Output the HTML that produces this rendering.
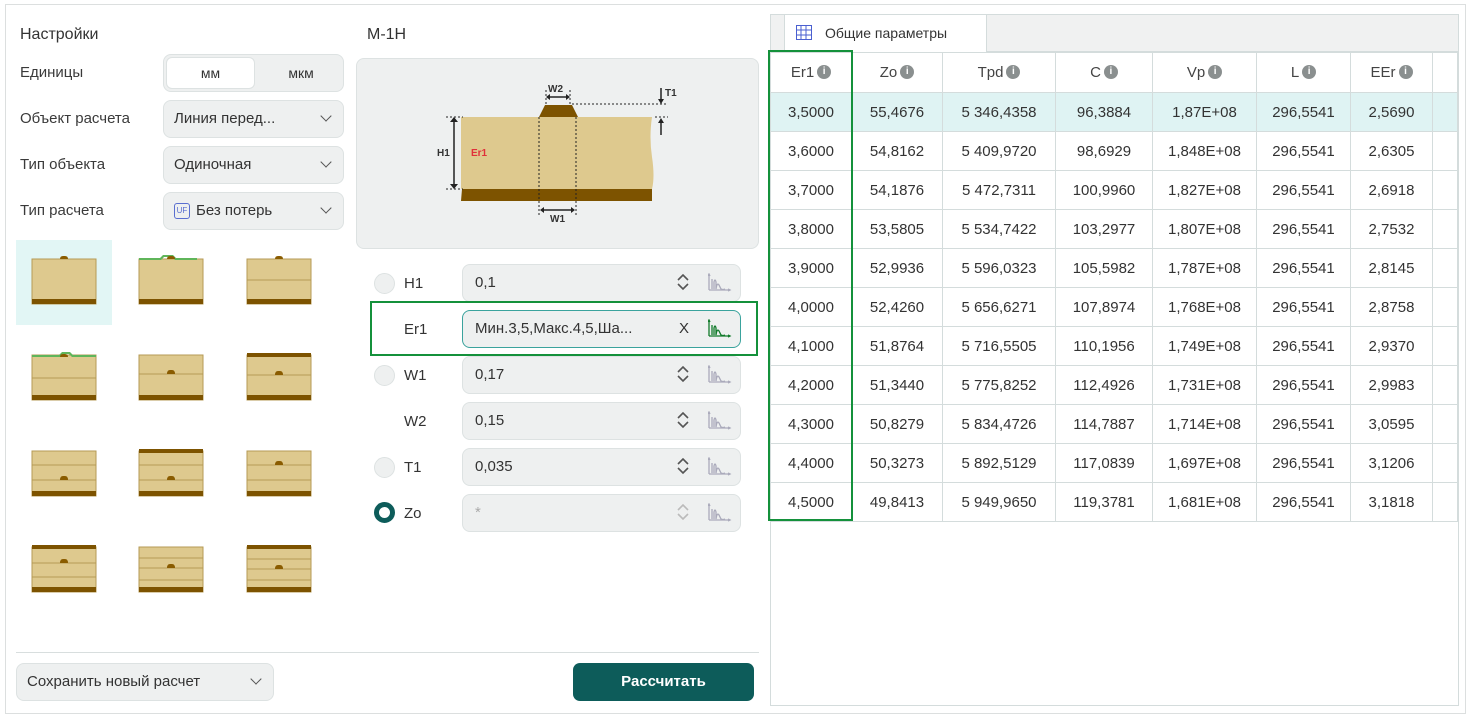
<!DOCTYPE html>
<html><head><meta charset="utf-8"><style>
*{box-sizing:border-box;margin:0;padding:0}
body{width:1471px;height:720px;background:#fff;font-family:"Liberation Sans",sans-serif;color:#333;font-size:15px;position:relative;overflow:hidden}
.a{position:absolute}
.lbl{position:absolute;left:20px;font-size:15px;color:#3a3a3a}
.ctl{position:absolute;left:163px;width:181px;height:38px;background:#eef0f0;border:1px solid #dde2e2;border-radius:8px;padding:0 0 0 10px;line-height:36px;font-size:15px}
.chev{position:absolute;right:13px;top:11px;width:8px;height:8px;border-right:1.5px solid #555;border-bottom:1.5px solid #555;transform:rotate(45deg)}
.inp{position:absolute;left:462px;width:279px;height:38px;background:#eef0f0;border:1px solid #dde2e2;border-radius:8px;line-height:36px;padding-left:12px;font-size:15px}
.rad{position:absolute;left:374px;width:21px;height:21px;border-radius:50%;background:#eef0f0;border:1px solid #dde2e2}
.pl{position:absolute;left:404px;font-size:15px}
.ud{position:absolute;left:214px;top:9px}
.gi{position:absolute;left:245px;top:8px}
table{border-collapse:collapse;position:absolute;left:770px;top:52px;font-size:15px}
td{border:1px solid #d4dcdc;height:39px;text-align:center;color:#333;vertical-align:middle}
tr.h td{height:40px;color:#444}
tr.s td{background:#dff3f3}
.i{display:inline-block;width:14px;height:14px;border-radius:50%;background:#8a8f8f;color:#fff;font-size:10px;line-height:14px;text-align:center;font-weight:bold;vertical-align:middle;margin-left:3px;position:relative;top:-1px}
</style></head><body>
<div class="a" style="left:5px;top:4px;width:1461px;height:710px;border:1px solid #dcdfdf"></div>

<div class="a" style="left:20px;top:26px;font-size:16px">Настройки</div>
<div class="a" style="left:367px;top:26px;font-size:16px">М-1Н</div>

<div class="lbl" style="top:64px">Единицы</div>
<div class="ctl" style="top:54px;padding:0">
 <div class="a" style="left:2px;top:2px;width:89px;height:32px;background:#fff;border-radius:6px;border:1px solid #dde2e2;text-align:center;line-height:30px;font-size:14px">мм</div>
 <div class="a" style="left:95px;top:2px;width:84px;height:32px;text-align:center;line-height:32px;font-size:14px">мкм</div>
</div>
<div class="lbl" style="top:110px">Объект расчета</div>
<div class="ctl" style="top:100px">Линия перед...<div class="chev"></div></div>
<div class="lbl" style="top:156px">Тип объекта</div>
<div class="ctl" style="top:146px">Одиночная<div class="chev"></div></div>
<div class="lbl" style="top:202px">Тип расчета</div>
<div class="ctl" style="top:192px"><span style="display:inline-block;width:16px;height:16px;border:1.5px solid #5a6fd0;border-radius:3px;font-size:8px;line-height:13px;text-align:center;color:#5a6fd0;vertical-align:2px;margin-right:6px">UF</span>Без потерь<div class="chev"></div></div>

<div class="a" style="left:16px;top:240px;width:96px;height:85px;background:#e2f6f5"></div>
<svg class="a" style="left:0;top:230px" width="360" height="400" viewBox="0 230 360 400">
<defs>
<g id="b"><rect x="0" y="3" width="64" height="45" fill="#dec98e" stroke="#b59a55" stroke-width="1"/><rect x="0" y="43" width="64" height="5" fill="#7d5300"/></g>
</defs>
<use href="#b" x="32" y="256"/><path d="M60 259 q0-3 3-3 h2 q3 0 3 3z" fill="#8a5c00"/>
<use href="#b" x="139" y="256"/><path d="M139 260 h22 l3-3 h8 l3 3 h22 v-2 h-21 l-3-3 h-10 l-3 3 h-21z" fill="#5fb55a"/><path d="M167 259 q0-3 3-3 h2 q3 0 3 3z" fill="#8a5c00"/>
<use href="#b" x="247" y="256"/><line x1="247" y1="280" x2="311" y2="280" stroke="#b59a55"/><path d="M275 259 q0-3 3-3 h2 q3 0 3 3z" fill="#8a5c00"/>
<use href="#b" x="32" y="352"/><line x1="32" y1="378" x2="96" y2="378" stroke="#b59a55"/><path d="M32 357 h28 l3-3 h6 l3 3 h24 v-2 h-23 l-3-3 h-8 l-3 3 h-27z" fill="#5fb55a"/><path d="M60 357 q0-3 3-3 h2 q3 0 3 3z" fill="#8a5c00"/>
<use href="#b" x="139" y="352"/><line x1="139" y1="374" x2="203" y2="374" stroke="#b59a55"/><path d="M167 374 q0-4 3-4 h2 q3 0 3 4z" fill="#8a5c00"/>
<use href="#b" x="247" y="352"/><rect x="247" y="353" width="64" height="4" fill="#7d5300"/><line x1="247" y1="375" x2="311" y2="375" stroke="#b59a55"/><path d="M275 375 q0-4 3-4 h2 q3 0 3 4z" fill="#8a5c00"/>
<use href="#b" x="32" y="448"/><line x1="32" y1="465" x2="96" y2="465" stroke="#b59a55"/><line x1="32" y1="480" x2="96" y2="480" stroke="#b59a55"/><path d="M60 480 q0-4 3-4 h2 q3 0 3 4z" fill="#8a5c00"/>
<use href="#b" x="139" y="448"/><rect x="139" y="449" width="64" height="4" fill="#7d5300"/><line x1="139" y1="465" x2="203" y2="465" stroke="#b59a55"/><line x1="139" y1="480" x2="203" y2="480" stroke="#b59a55"/><path d="M167 480 q0-4 3-4 h2 q3 0 3 4z" fill="#8a5c00"/>
<use href="#b" x="247" y="448"/><line x1="247" y1="465" x2="311" y2="465" stroke="#b59a55"/><line x1="247" y1="480" x2="311" y2="480" stroke="#b59a55"/><path d="M275 465 q0-4 3-4 h2 q3 0 3 4z" fill="#8a5c00"/>
<use href="#b" x="32" y="544"/><rect x="32" y="545" width="64" height="4" fill="#7d5300"/><line x1="32" y1="563" x2="96" y2="563" stroke="#b59a55"/><line x1="32" y1="577" x2="96" y2="577" stroke="#b59a55"/><path d="M60 563 q0-4 3-4 h2 q3 0 3 4z" fill="#8a5c00"/>
<use href="#b" x="139" y="544"/><line x1="139" y1="558" x2="203" y2="558" stroke="#b59a55"/><line x1="139" y1="568" x2="203" y2="568" stroke="#b59a55"/><line x1="139" y1="580" x2="203" y2="580" stroke="#b59a55"/><path d="M167 568 q0-4 3-4 h2 q3 0 3 4z" fill="#8a5c00"/>
<use href="#b" x="247" y="544"/><rect x="247" y="545" width="64" height="4" fill="#7d5300"/><line x1="247" y1="559" x2="311" y2="559" stroke="#b59a55"/><line x1="247" y1="569" x2="311" y2="569" stroke="#b59a55"/><line x1="247" y1="580" x2="311" y2="580" stroke="#b59a55"/><path d="M275 569 q0-4 3-4 h2 q3 0 3 4z" fill="#8a5c00"/>
</svg>

<div class="a" style="left:356px;top:58px;width:403px;height:191px;background:#eef0f0;border:1px solid #dde2e2;border-radius:8px"></div>
<svg class="a" style="left:356px;top:58px" width="403" height="191" viewBox="356 58 403 191">
<path d="M461 117 H652 q-3 20 0 40 q3 20 0 32 H461z" fill="#dec98e"/>
<path d="M462 189 H652 V201 H461z" fill="#7d5300"/>
<path d="M539 117 l6-12 h27 l6 12z" fill="#7d5300"/>
<g stroke="#222" stroke-width="1" stroke-dasharray="2,2" fill="none">
<line x1="539" y1="117" x2="539" y2="215"/><line x1="576" y1="117" x2="576" y2="215"/>
<line x1="546" y1="90" x2="546" y2="104"/><line x1="570" y1="90" x2="570" y2="104"/>
<line x1="572" y1="104" x2="668" y2="104"/><line x1="446" y1="117" x2="463" y2="117"/><line x1="446" y1="189" x2="463" y2="189"/><line x1="655" y1="117" x2="668" y2="117"/>
</g>
<g stroke="#222" stroke-width="1.5" fill="#222">
<line x1="454" y1="120" x2="454" y2="186"/><path d="M450 122 l4-5 4 5z M450 184 l4 5 4-5z" stroke="none"/>
<line x1="548" y1="97" x2="568" y2="97"/><path d="M550 94 l-4 3 4 3z M566 94 l4 3-4 3z" stroke="none"/>
<line x1="542" y1="210" x2="573" y2="210"/><path d="M544 207 l-4 3 4 3z M571 207 l4 3-4 3z" stroke="none"/>
<line x1="661" y1="88" x2="661" y2="100"/><path d="M658 99 l3 5 3-5z" stroke="none"/>
<line x1="661" y1="122" x2="661" y2="135"/><path d="M658 123 l3-5 3 5z" stroke="none"/>
</g>
<g font-family="Liberation Sans" font-size="10" font-weight="bold" fill="#333">
<text x="437" y="156">H1</text><text x="548" y="92">W2</text><text x="550" y="222">W1</text><text x="665" y="96">T1</text>
<text x="471" y="156" fill="#e0303a">Er1</text></g>
</svg>

<svg width="0" height="0" class="a"><defs>
<g id="ud"><path d="M1 6 l5-5 5 5 M1 10 l5 5 5-5" fill="none" stroke-width="1.6"/></g>
<g id="gr"><path d="M1 17 V1 M0 3 l1-2 1 2 M1 17 H22 M20 16 l2 1-2 1 M4 16 V6 M6 16 V9 q1-4 2 0 V16 q1-7 3-4 l2 4 q2 1 4 0" fill="none" stroke-width="1.3"/></g>
</defs></svg>

<div class="rad" style="top:273px"></div><div class="pl" style="top:275px">H1</div>
<div class="inp" style="top:264px">0,1<svg class="ud" width="12" height="17" stroke="#555"><use href="#ud"/></svg><svg class="gi" width="24" height="19" stroke="#aab"><use href="#gr"/></svg></div>

<div class="a" style="left:370px;top:301px;width:388px;height:55px;border:2px solid #14913b"></div>
<div class="pl" style="top:321px">Er1</div>
<div class="inp" style="top:310px;border:1.5px solid #3aa39d">Мин.3,5,Макс.4,5,Ша...<span class="a" style="left:216px;top:0">X</span><svg class="gi" width="24" height="19" stroke="#117a2a"><use href="#gr"/></svg></div>

<div class="rad" style="top:365px"></div><div class="pl" style="top:367px">W1</div>
<div class="inp" style="top:356px">0,17<svg class="ud" width="12" height="17" stroke="#555"><use href="#ud"/></svg><svg class="gi" width="24" height="19" stroke="#aab"><use href="#gr"/></svg></div>

<div class="pl" style="top:413px">W2</div>
<div class="inp" style="top:402px">0,15<svg class="ud" width="12" height="17" stroke="#555"><use href="#ud"/></svg><svg class="gi" width="24" height="19" stroke="#aab"><use href="#gr"/></svg></div>

<div class="rad" style="top:457px"></div><div class="pl" style="top:459px">T1</div>
<div class="inp" style="top:448px">0,035<svg class="ud" width="12" height="17" stroke="#555"><use href="#ud"/></svg><svg class="gi" width="24" height="19" stroke="#aab"><use href="#gr"/></svg></div>

<div class="rad" style="top:502px;background:#fff;border:5px solid #0d5c5a"></div><div class="pl" style="top:505px">Zo</div>
<div class="inp" style="top:494px;color:#aaa">*<svg class="ud" width="12" height="17" stroke="#bbb"><use href="#ud"/></svg><svg class="gi" width="24" height="19" stroke="#aab"><use href="#gr"/></svg></div>

<div class="a" style="left:16px;top:652px;width:743px;height:1px;background:#d8dede"></div>
<div class="ctl" style="left:16px;top:663px;width:258px;height:38px">Сохранить новый расчет<div class="chev"></div></div>
<div class="a" style="left:573px;top:663px;width:181px;height:38px;background:#0d5c5a;border-radius:7px;color:#fff;text-align:center;line-height:38px;font-size:15px;font-weight:bold">Рассчитать</div>

<div class="a" style="left:770px;top:14px;width:689px;height:692px;border:1px solid #d4dcdc"></div>
<div class="a" style="left:771px;top:15px;width:687px;height:37px;background:#f0f1f1;border-bottom:1px solid #d4dcdc"></div>
<div class="a" style="left:784px;top:15px;width:203px;height:38px;background:#fff;border-left:1px solid #d4dcdc;border-right:1px solid #d4dcdc;line-height:36px;padding-left:40px;font-size:14px">Общие параметры</div>
<svg class="a" style="left:796px;top:25px" width="16" height="15"><rect x="0.5" y="0.5" width="15" height="14" fill="#fff" stroke="#4a5fd0"/><path d="M0 5H16M0 10H16M5 0V15M10 0V15" stroke="#4a5fd0"/></svg>

<table>
<colgroup><col style="width:81px"><col style="width:91px"><col style="width:113px"><col style="width:97px"><col style="width:104px"><col style="width:94px"><col style="width:82px"><col style="width:25px"></colgroup>
<tr class="h"><td>Er1<span class="i">i</span></td><td>Zo<span class="i">i</span></td><td>Tpd<span class="i">i</span></td><td>C<span class="i">i</span></td><td>Vp<span class="i">i</span></td><td>L<span class="i">i</span></td><td>EEr<span class="i">i</span></td><td></td></tr>
<tr class="s"><td>3,5000</td><td>55,4676</td><td>5 346,4358</td><td>96,3884</td><td>1,87E+08</td><td>296,5541</td><td>2,5690</td><td></td></tr>
<tr><td>3,6000</td><td>54,8162</td><td>5 409,9720</td><td>98,6929</td><td>1,848E+08</td><td>296,5541</td><td>2,6305</td><td></td></tr>
<tr><td>3,7000</td><td>54,1876</td><td>5 472,7311</td><td>100,9960</td><td>1,827E+08</td><td>296,5541</td><td>2,6918</td><td></td></tr>
<tr><td>3,8000</td><td>53,5805</td><td>5 534,7422</td><td>103,2977</td><td>1,807E+08</td><td>296,5541</td><td>2,7532</td><td></td></tr>
<tr><td>3,9000</td><td>52,9936</td><td>5 596,0323</td><td>105,5982</td><td>1,787E+08</td><td>296,5541</td><td>2,8145</td><td></td></tr>
<tr><td>4,0000</td><td>52,4260</td><td>5 656,6271</td><td>107,8974</td><td>1,768E+08</td><td>296,5541</td><td>2,8758</td><td></td></tr>
<tr><td>4,1000</td><td>51,8764</td><td>5 716,5505</td><td>110,1956</td><td>1,749E+08</td><td>296,5541</td><td>2,9370</td><td></td></tr>
<tr><td>4,2000</td><td>51,3440</td><td>5 775,8252</td><td>112,4926</td><td>1,731E+08</td><td>296,5541</td><td>2,9983</td><td></td></tr>
<tr><td>4,3000</td><td>50,8279</td><td>5 834,4726</td><td>114,7887</td><td>1,714E+08</td><td>296,5541</td><td>3,0595</td><td></td></tr>
<tr><td>4,4000</td><td>50,3273</td><td>5 892,5129</td><td>117,0839</td><td>1,697E+08</td><td>296,5541</td><td>3,1206</td><td></td></tr>
<tr><td>4,5000</td><td>49,8413</td><td>5 949,9650</td><td>119,3781</td><td>1,681E+08</td><td>296,5541</td><td>3,1818</td><td></td></tr>
</table>
<div class="a" style="left:768px;top:50px;width:85px;height:471px;border:2px solid #14913b"></div>
</body></html>
